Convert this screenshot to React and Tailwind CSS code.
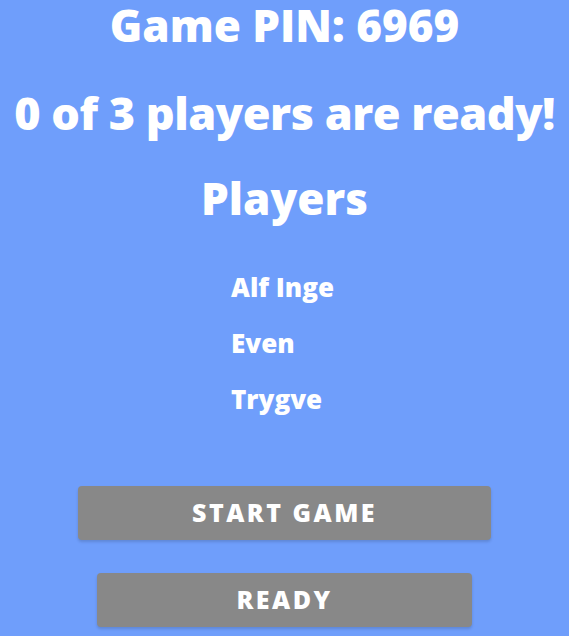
import React from 'react';

const players = ['Alf Inge', 'Even', 'Trygve'];

export default function App() {
  return (
    <div className="min-h-[636px] w-full bg-[#6f9efb] text-white font-extrabold flex flex-col items-center pt-[3px]" style={{ fontFamily: '"Open Sans", sans-serif' }}>
      <h1 className="text-[44px] leading-none">Game PIN: 6969</h1>
      <h2 className="text-[45px] leading-none mt-[43px] tracking-[-0.5px]">0 of 3 players are ready!</h2>
      <h2 className="text-[44px] leading-none mt-[41px]">Players</h2>

      <ul className="mt-[54px] w-[107px] flex flex-col gap-[30px]">
        {players.map((name) => (
          <li key={name} className="text-[26px] leading-none">{name}</li>
        ))}
      </ul>

      <button className="mt-[74px] w-[413px] h-[54px] rounded-[4px] bg-[#888888] shadow-[0_2px_3px_rgba(0,0,0,0.15)] text-[25px] tracking-[2.5px]">
        START GAME
      </button>
      <button className="mt-[33px] w-[375px] h-[54px] rounded-[4px] bg-[#888888] shadow-[0_2px_3px_rgba(0,0,0,0.15)] text-[25px] tracking-[2.5px]">
        READY
      </button>
    </div>
  );
}
